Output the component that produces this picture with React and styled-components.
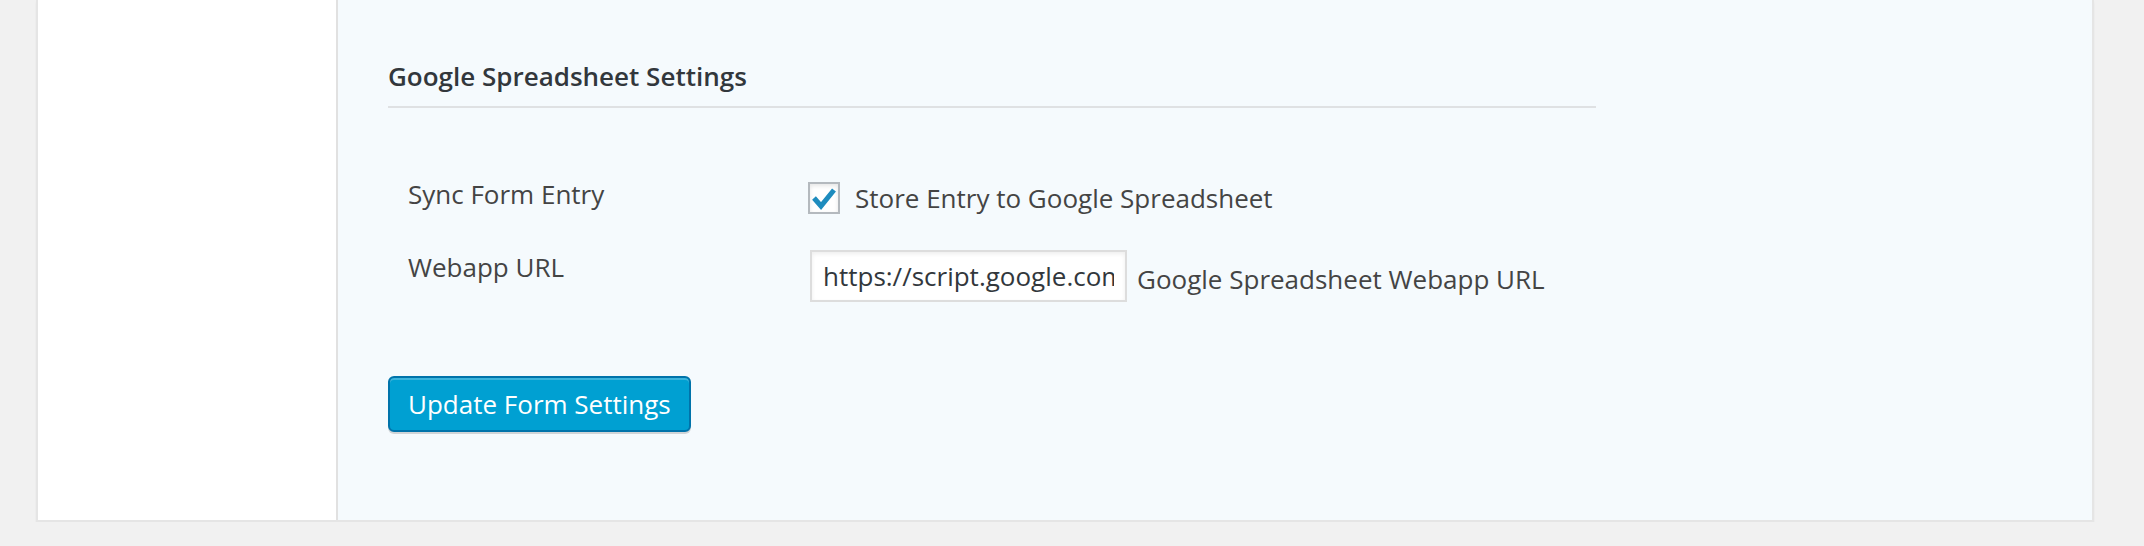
import React from 'react';
import styled, { createGlobalStyle } from 'styled-components';

const GlobalStyle = createGlobalStyle`
  body {
    margin: 0;
    background: #f1f1f1;
    font-family: "Open Sans", "Noto Sans", sans-serif;
    color: #444;
  }
`

const Card = styled.div`
  display: flex;
  width: 2058px;
  margin-left: 36px;
  box-sizing: border-box;
  border: 2px solid #e5e5e5;
  border-top: none;
  box-shadow: 0 2px 2px rgba(0, 0, 0, 0.05);
  background: #fff;
`

const Sidebar = styled.div`
  width: 298px;
  flex-shrink: 0;
  background: #fff;
  border-right: 2px solid #e1e1e1;
`

const Panel = styled.div`
  flex: 1;
  background: #f5fafd;
  padding: 58px 50px 88px;
`

const Heading = styled.h3`
  width: 1208px;
  margin: 0 0 74px;
  padding-bottom: 12px;
  border-bottom: 2px solid #dfe1e3;
  font-size: 26px;
  line-height: 36px;
  font-weight: 600;
  color: #32373c;
`

const Row = styled.div`
  display: grid;
  grid-template-columns: 420px 1fr;
  margin-bottom: ${p => p.$gap}px;
`

const Label = styled.div`
  padding-left: 20px;
  padding-top: ${p => p.$offset}px;
  font-size: 26px;
  line-height: 24px;
  color: #444;
`

const Control = styled.div`
  display: flex;
  align-items: ${p => p.$align || 'center'};
  font-size: 26px;
  color: #444;
`

const CheckBox = styled.span`
  display: inline-flex;
  align-items: center;
  justify-content: center;
  width: 32px;
  height: 32px;
  box-sizing: border-box;
  border: 2px solid #b4b9be;
  background: #fff;
  box-shadow: inset 0 2px 4px rgba(0, 0, 0, 0.1);
  margin-right: 15px;
`

const CheckText = styled.span`
  line-height: 32px;
`

const TextInput = styled.input`
  width: 317px;
  height: 52px;
  box-sizing: border-box;
  margin: 0 10px 0 2px;
  padding: 0 11px;
  border: 2px solid #ddd;
  box-shadow: inset 0 2px 4px rgba(0, 0, 0, 0.07);
  background: #fff;
  font-family: inherit;
  font-size: 26px;
  color: #32373c;
  outline: none;
`

const Description = styled.span`
  line-height: 46px;
  padding-top: 6px;
`

const PrimaryButton = styled.button`
  height: 56px;
  padding: 0 18px;
  border: 2px solid #0073aa;
  border-radius: 6px;
  background: #00a0d2;
  box-shadow: inset 0 2px 0 rgba(120, 200, 230, 0.5), 0 2px 0 rgba(0, 0, 0, 0.15);
  color: #fff;
  font-family: inherit;
  font-size: 26px;
  line-height: 50px;
  cursor: pointer;
`

const Check = () => (
  <svg width="26" height="26" viewBox="0 0 26 26">
    <polyline points="3,13 10,21 23,5" fill="none" stroke="#1e8cbe" strokeWidth="5" strokeLinecap="butt" strokeLinejoin="miter" />
  </svg>
)

const App = () => {
  return (
    <>
      <GlobalStyle />
      <Card>
        <Sidebar />
        <Panel>
          <Heading>Google Spreadsheet Settings</Heading>
          <Row $gap={36}>
            <Label $offset={0}>Sync Form Entry</Label>
            <Control>
              <CheckBox><Check /></CheckBox>
              <CheckText>Store Entry to Google Spreadsheet</CheckText>
            </Control>
          </Row>
          <Row $gap={74}>
            <Label $offset={5}>Webapp URL</Label>
            <Control $align="flex-start">
              <TextInput defaultValue="https://script.google.com/macros/s/exec" />
              <Description>Google Spreadsheet Webapp URL</Description>
            </Control>
          </Row>
          <PrimaryButton>Update Form Settings</PrimaryButton>
        </Panel>
      </Card>
    </>
  )
}

export default App;
